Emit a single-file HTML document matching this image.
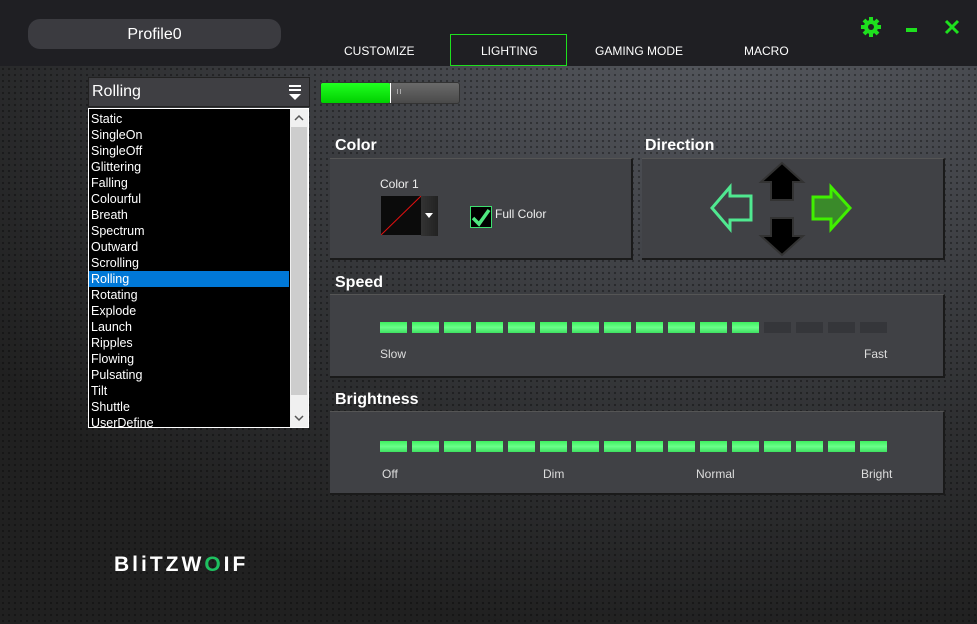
<!DOCTYPE html>
<html><head><meta charset="utf-8"><style>
*{margin:0;padding:0;box-sizing:border-box}
body{width:977px;height:624px;overflow:hidden;font-family:"Liberation Sans","DejaVu Sans",sans-serif;position:relative;
background:radial-gradient(ellipse 900px 650px at 75% 0%,#575a60 0%,#45474c 35%,#2e2f31 70%,#202020 100%);}
.dots{position:absolute;left:0;top:66px;width:977px;height:558px;background-image:radial-gradient(circle,rgba(0,0,0,.35) 1px,transparent 1.3px);background-size:6px 6px}
.top{position:absolute;left:0;top:0;width:977px;height:66px;background:#1f1f23}
.abs{position:absolute}
.prof{left:28px;top:19px;width:253px;height:30px;border-radius:12px;background:#3b3b40;color:#fff;font-size:16px;text-align:center;line-height:31px}
.tab{top:44px;color:#fff;font-size:12px}
.panel{background:#404145;border-right:2px solid #1a1a1a;border-bottom:2px solid #1a1a1a;border-top:1px solid #555}
h3{position:absolute;color:#fff;font-size:16px;font-weight:bold}
.seg{position:absolute;width:27px;height:11px;background:linear-gradient(#3ef05f,#6aff8a 50%,#3ee060)}
.off{background:#35363a}
.lbl{position:absolute;color:#ddd;font-size:12px}
.list{left:88px;top:108px;width:221px;height:320px;background:#000;border:1px solid #fff;overflow:hidden;padding-top:2px}
.list div{height:16px;line-height:16px;color:#fff;font-size:12.5px;padding-left:2px;width:200px}
.list .sel{background:#0078d7}
</style></head><body>
<div class="dots"></div>
<div class="top"></div>
<div class="abs prof">Profile0</div>
<div class="abs tab" style="left:344px">CUSTOMIZE</div>
<div class="abs" style="left:450px;top:34px;width:117px;height:32px;border:1px solid #1ee01e"></div>
<div class="abs tab" style="left:481px">LIGHTING</div>
<div class="abs tab" style="left:595px">GAMING MODE</div>
<div class="abs tab" style="left:744px">MACRO</div>
<svg class="abs" style="left:860px;top:16px" width="22" height="22" viewBox="0 0 22 22"><g fill="#1ee01e"><circle cx="11" cy="11" r="7"/><g stroke="#1ee01e" stroke-width="4"><line x1="11" y1="1" x2="11" y2="21"/><line x1="1" y1="11" x2="21" y2="11"/><line x1="4" y1="4" x2="18" y2="18"/><line x1="18" y1="4" x2="4" y2="18"/></g></g><circle cx="11" cy="11" r="3" fill="#1f1f23"/></svg>
<div class="abs" style="left:906px;top:28px;width:11px;height:4px;background:#1ee01e"></div>
<svg class="abs" style="left:944px;top:19px" width="16" height="16"><path d="M2 2L14 14M14 2L2 14" stroke="#1ee01e" stroke-width="3"/></svg>

<div class="abs" style="left:88px;top:77px;width:222px;height:30px;background:#3f3f43;border:1px solid #222;color:#fff;font-size:16px;line-height:28px;padding-left:3px">Rolling
<div class="abs" style="left:200px;top:7px;width:12px;height:2px;background:#fff;box-shadow:0 4px #fff"></div>
<div class="abs" style="left:200px;top:16px;width:0;height:0;border-left:6px solid transparent;border-right:6px solid transparent;border-top:6px solid #fff"></div></div>
<div class="abs list">
<div>Static</div><div>SingleOn</div><div>SingleOff</div><div>Glittering</div><div>Falling</div><div>Colourful</div><div>Breath</div><div>Spectrum</div><div>Outward</div><div>Scrolling</div><div class="sel">Rolling</div><div>Rotating</div><div>Explode</div><div>Launch</div><div>Ripples</div><div>Flowing</div><div>Pulsating</div><div>Tilt</div><div>Shuttle</div><div>UserDefine</div>
<div class="abs" style="left:201px;top:0;width:18px;height:318px;background:#f0f0f0"></div>
<div class="abs" style="left:202px;top:18px;width:16px;height:268px;background:#cdcdcd"></div>
<svg class="abs" style="left:204px;top:4px" width="12" height="10"><path d="M2 7L6 3L10 7" stroke="#555" stroke-width="1.5" fill="none"/></svg>
<svg class="abs" style="left:204px;top:304px" width="12" height="10"><path d="M2 3L6 7L10 3" stroke="#555" stroke-width="1.5" fill="none"/></svg>
</div>

<div class="abs" style="left:320px;top:82px;width:140px;height:22px;border-radius:3px;background:linear-gradient(#6a6a6a,#4a4a4a);border:1px solid #333"></div>
<div class="abs" style="left:321px;top:83px;width:69px;height:20px;border-radius:2px;background:linear-gradient(#20ff20,#00d000)"></div>
<div class="abs" style="left:390px;top:83px;width:1px;height:20px;background:#fff"></div>
<div class="abs" style="left:397px;top:89px;width:4px;height:5px;border-left:1px solid #aaa;border-right:1px solid #aaa"></div>

<h3 style="left:335px;top:137px">Color</h3>
<h3 style="left:645px;top:137px">Direction</h3>
<h3 style="left:335px;top:274px">Speed</h3>
<h3 style="left:335px;top:391px">Brightness</h3>

<div class="abs panel" style="left:330px;top:158px;width:303px;height:102px"></div>
<div class="abs" style="left:380px;top:177px;color:#eee;font-size:12px">Color 1</div>
<div class="abs" style="left:381px;top:196px;width:40px;height:39px;background:#0b0b0b"><svg width="40" height="39"><line x1="0" y1="39" x2="40" y2="0" stroke="#e01010" stroke-width="1"/></svg></div>
<div class="abs" style="left:421px;top:196px;width:17px;height:40px;background:linear-gradient(90deg,#333,#222)"></div>
<div class="abs" style="left:425px;top:213px;border-left:4px solid transparent;border-right:4px solid transparent;border-top:5px solid #fff"></div>
<div class="abs" style="left:470px;top:206px;width:22px;height:22px;border:1px solid #3ee070;background:#000"><svg width="20" height="20"><path d="M2 11L8 17L18 3" stroke="#4ee880" stroke-width="3.5" fill="none"/></svg></div>
<div class="abs" style="left:495px;top:207px;color:#eee;font-size:12px">Full Color</div>

<div class="abs panel" style="left:642px;top:158px;width:303px;height:102px"></div>
<svg class="abs" style="left:700px;top:160px" width="160" height="100">
<path d="M12 48L30 27V36H51V60H30V69Z" fill="none" stroke="#50e890" stroke-width="3"/>
<path d="M113 37H131V27L150 48L131 69V59H113Z" fill="#3a8a2a" stroke="#40f000" stroke-width="3"/>
<path d="M82 3L103 22H93V40H71V22H61Z" fill="#000" stroke="#333" stroke-width="2"/>
<path d="M71 58H93V76H103L82 95L61 76H71Z" fill="#000" stroke="#333" stroke-width="2"/>
</svg>

<div class="abs panel" style="left:330px;top:294px;width:615px;height:84px"></div>
<div class="abs panel" style="left:330px;top:411px;width:615px;height:84px"></div>
<div class="lbl" style="left:380px;top:347px">Slow</div>
<div class="lbl" style="left:864px;top:347px">Fast</div>
<div class="lbl" style="left:382px;top:467px">Off</div>
<div class="lbl" style="left:543px;top:467px">Dim</div>
<div class="lbl" style="left:696px;top:467px">Normal</div>
<div class="lbl" style="left:861px;top:467px">Bright</div>
<div class="seg" style="left:380px;top:322px"></div><div class="seg" style="left:412px;top:322px"></div><div class="seg" style="left:444px;top:322px"></div><div class="seg" style="left:476px;top:322px"></div><div class="seg" style="left:508px;top:322px"></div><div class="seg" style="left:540px;top:322px"></div><div class="seg" style="left:572px;top:322px"></div><div class="seg" style="left:604px;top:322px"></div><div class="seg" style="left:636px;top:322px"></div><div class="seg" style="left:668px;top:322px"></div><div class="seg" style="left:700px;top:322px"></div><div class="seg" style="left:732px;top:322px"></div><div class="seg off" style="left:764px;top:322px"></div><div class="seg off" style="left:796px;top:322px"></div><div class="seg off" style="left:828px;top:322px"></div><div class="seg off" style="left:860px;top:322px"></div>
<div class="seg" style="left:380px;top:441px"></div><div class="seg" style="left:412px;top:441px"></div><div class="seg" style="left:444px;top:441px"></div><div class="seg" style="left:476px;top:441px"></div><div class="seg" style="left:508px;top:441px"></div><div class="seg" style="left:540px;top:441px"></div><div class="seg" style="left:572px;top:441px"></div><div class="seg" style="left:604px;top:441px"></div><div class="seg" style="left:636px;top:441px"></div><div class="seg" style="left:668px;top:441px"></div><div class="seg" style="left:700px;top:441px"></div><div class="seg" style="left:732px;top:441px"></div><div class="seg" style="left:764px;top:441px"></div><div class="seg" style="left:796px;top:441px"></div><div class="seg" style="left:828px;top:441px"></div><div class="seg" style="left:860px;top:441px"></div>

<div class="abs" style="left:114px;top:553px;color:#fff;font-size:21px;font-weight:bold;letter-spacing:3px">BliTZW<span style="color:#1ec060">O</span>IF</div>
</body></html>
